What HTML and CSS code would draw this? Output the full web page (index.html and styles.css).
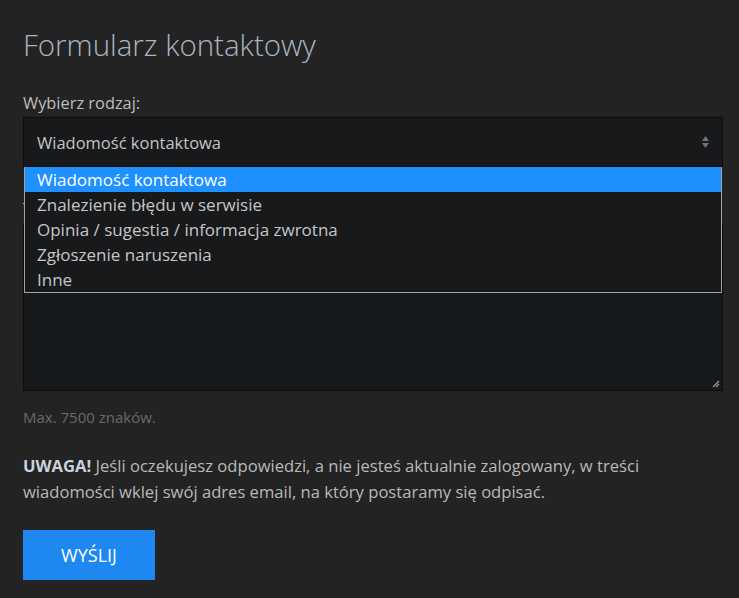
FILE: index.html
```html
<!DOCTYPE html>
<html lang="pl">
<head>
  <meta charset="UTF-8">
  <title>Formularz kontaktowy</title>
  <link rel="stylesheet" href="styles.css">
</head>
<body>

  <div class="page">
    <h1>Formularz kontaktowy</h1>

    <form class="contact-form">
      <label class="field-label">Wybierz rodzaj:</label>
      <div class="select-wrap">
        <div class="select-box">
          <span>Wiadomość kontaktowa</span>
          <svg class="select-arrows" width="9" height="14" viewBox="0 0 9 14">
            <path d="M4.5 1 L8 6 H1 Z" fill="#6f7378"/>
            <path d="M4.5 13 L8 8 H1 Z" fill="#6f7378"/>
          </svg>
        </div>
        <ul class="select-menu">
          <li class="active">Wiadomość kontaktowa</li>
          <li>Znalezienie błędu w serwisie</li>
          <li>Opinia / sugestia / informacja zwrotna</li>
          <li>Zgłoszenie naruszenia</li>
          <li>Inne</li>
        </ul>
      </div>

      <label class="field-label">Treść wiadomości:</label>
      <div class="textarea-box">
        <svg class="grip" width="9" height="9" viewBox="0 0 9 9">
          <path d="M8 2 L2 8 M8 5 L5 8" stroke="#9a9a9a" stroke-width="1.2"/>
        </svg>
      </div>
      <p class="hint">Max. 7500 znaków.</p>

      <p class="note"><strong>UWAGA!</strong> Jeśli oczekujesz odpowiedzi, a nie jesteś aktualnie zalogowany, w treści wiadomości wklej swój adres email, na który postaramy się odpisać.</p>

      <button type="button" class="send-btn">WYŚLIJ</button>
    </form>
  </div>

</body>
</html>
```

FILE: styles.css
```css
body {
  margin: 0;
  background: #232323;
  font-family: 'Open Sans', 'Noto Sans', sans-serif;
  color: #b9b9b9;
}
.page {
  padding: 27px 16px 0 23px;
}
h1 {
  margin: 0 0 30px;
  font-size: 29.5px;
  font-weight: 300;
  line-height: 36px;
  color: #a9b6c2;
}
.field-label {
  display: block;
  font-size: 16.4px;
  line-height: 20px;
  color: #bdbdbd;
  margin-bottom: 4px;
}
.select-wrap {
  position: relative;
  margin-bottom: 32px;
}
.select-box {
  height: 48px;
  display: flex;
  align-items: center;
  justify-content: space-between;
  padding: 0 12px 0 13px;
  background: #17191b;
  border: 1px solid #0d0d0d;
  font-size: 16.5px;
  color: #c4c4c4;
}
.select-menu {
  position: absolute;
  left: 1px;
  right: 1px;
  top: 50px;
  margin: 0;
  padding: 0;
  list-style: none;
  background: #17191b;
  border: 1px solid #a3a3a3;
  border-top: none;
  z-index: 2;
}
.select-menu li {
  height: 25px;
  line-height: 25px;
  padding-left: 12px;
  font-size: 17px;
  color: #c6c6c6;
}
.select-menu li.active {
  background: #1e90ff;
  color: #fff;
}
.textarea-box {
  position: relative;
  height: 166px;
  background: #16191c;
  border: 1px solid #0d0d0d;
}
.grip {
  position: absolute;
  right: 2px;
  bottom: 2px;
}
.hint {
  margin: 16px 0 0;
  font-size: 15px;
  line-height: 20px;
  color: #6a6a6a;
}
.note {
  margin: 26px 0 0;
  font-size: 16.6px;
  line-height: 26px;
  color: #b9b9b9;
}
.note strong {
  color: #c9d2da;
}
.send-btn {
  margin-top: 25px;
  width: 132px;
  height: 50px;
  border: none;
  background: #1e88f0;
  color: #fff;
  font-family: inherit;
  font-size: 18px;
  cursor: pointer;
}
```
